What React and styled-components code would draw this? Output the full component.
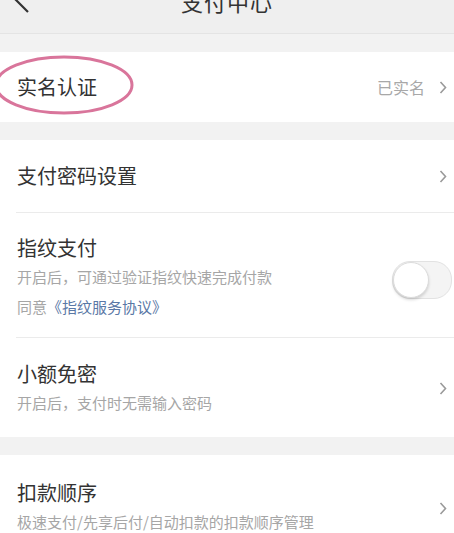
import React from "react";
import styled, { createGlobalStyle } from "styled-components";

const Global = createGlobalStyle`
  body {
    margin: 0;
    background: #f2f2f2;
    font-family: "Noto Sans CJK SC", "Noto Sans", sans-serif;
  }
`;

const Page = styled.div`
  width: 454px;
  height: 533px;
  overflow: hidden;
  background: #f2f2f2;
`;

const Header = styled.div`
  height: 33px;
  position: relative;
  display: flex;
  justify-content: center;
  align-items: flex-start;
  background: #efefef;
  border-bottom: 1px solid #e4e4e4;
  overflow: hidden;
`;

const Back = styled.svg`
  position: absolute;
  left: 12px;
  top: -14px;
`;

const Title = styled.div`
  margin-top: -11px;
  font-size: 22px;
  line-height: 24px;
  color: #333;
  letter-spacing: 1px;
`;

const Group = styled.div`
  background: #fff;
  margin-top: ${(p) => p.gap}px;
`;

const Row = styled.div`
  position: relative;
  display: flex;
  align-items: center;
  min-height: ${(p) => p.h}px;
  padding: ${(p) => p.pad || "0"};
  padding-left: 17px;
  padding-right: 7px;
  box-sizing: border-box;
  &::before {
    content: "";
    display: ${(p) => (p.line ? "block" : "none")};
    position: absolute;
    left: 16px;
    right: 0;
    top: 0;
    border-top: 1px solid #ebebeb;
  }
`;

const Body = styled.div`
  flex: 1;
  display: flex;
  flex-direction: column;
`;

const Name = styled.div`
  font-size: 20px;
  line-height: 28px;
  color: #333;
`;

const Sub = styled.div`
  font-size: 15px;
  line-height: 30px;
  color: #a6a6a6;
`;

const Link = styled.span`
  color: #5a78a6;
`;

const Value = styled.span`
  font-size: 16px;
  color: #a8a8a8;
  margin-right: 14px;
`;

const Toggle = styled.div`
  width: 58px;
  height: 36px;
  border-radius: 18px;
  background: #f4f4f4;
  border: 1px solid #e2e2e2;
  position: relative;
  margin-right: -5px;
  margin-top: 4px;
  &::after {
    content: "";
    position: absolute;
    left: 0;
    top: 0;
    width: 34px;
    height: 34px;
    border-radius: 50%;
    background: #fff;
    border: 1px solid #dcdcdc;
    box-shadow: 0 2px 3px rgba(0, 0, 0, 0.15);
  }
`;

const Ring = styled.svg`
  position: absolute;
  left: -16px;
  top: 0;
  pointer-events: none;
`;

function Chevron() {
  return (
    <svg width="8" height="13" viewBox="0 0 8 13">
      <path d="M1.5 1 L6.5 6.5 L1.5 12" fill="none" stroke="#9a9a9a" strokeWidth="1.6" />
    </svg>
  );
}

export default function App() {
  return (
    <Page>
      <Global />
      <Header>
        <Back width="20" height="30" viewBox="0 0 20 30">
          <path d="M16 2 L4 14 L16 26" fill="none" stroke="#333" strokeWidth="2.2" />
        </Back>
        <Title>支付中心</Title>
      </Header>

      <Group gap={18}>
        <Row h={70}>
          <Body>
            <Name>实名认证</Name>
          </Body>
          <Value>已实名</Value>
          <Chevron />
          <Ring width="160" height="70" viewBox="0 0 160 70">
            <ellipse cx="80" cy="33" rx="68" ry="28" fill="none" stroke="#d9759b" strokeWidth="3" />
          </Ring>
        </Row>
      </Group>

      <Group gap={18}>
        <Row h={72}>
          <Body>
            <Name>支付密码设置</Name>
          </Body>
          <Chevron />
        </Row>
        <Row line h={125} pad="21px 0 15px">
          <Body>
            <Name>指纹支付</Name>
            <Sub>开启后，可通过验证指纹快速完成付款</Sub>
            <Sub>
              同意<Link>《指纹服务协议》</Link>
            </Sub>
          </Body>
          <Toggle />
        </Row>
        <Row line h={100} pad="22px 0 19px">
          <Body>
            <Name>小额免密</Name>
            <Sub>开启后，支付时无需输入密码</Sub>
          </Body>
          <Chevron />
        </Row>
      </Group>

      <Group gap={18}>
        <Row h={90} pad="24px 0 10px">
          <Body>
            <Name>扣款顺序</Name>
            <Sub>极速支付/先享后付/自动扣款的扣款顺序管理</Sub>
          </Body>
          <Chevron />
        </Row>
      </Group>
    </Page>
  );
}
